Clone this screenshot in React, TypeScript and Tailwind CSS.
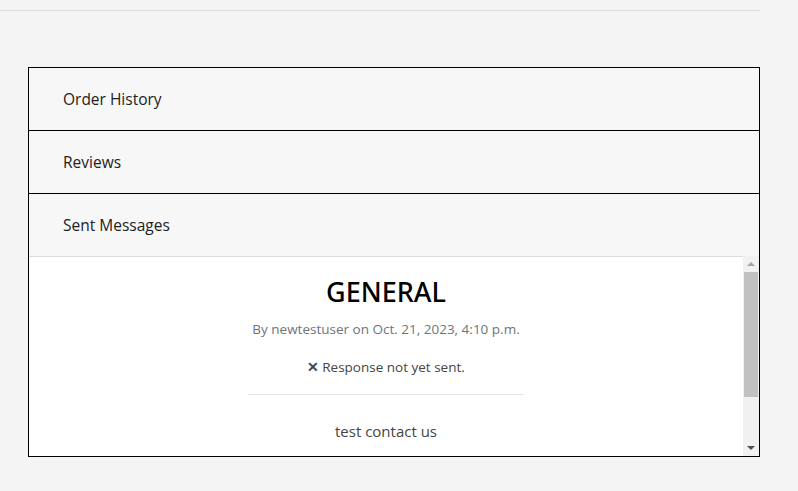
import * as React from "react"

const sections = ["Order History", "Reviews"]

const Scrollbar = () => (
  <div className="flex w-[16px] shrink-0 flex-col items-center bg-[#f1f1f1]">
    <div className="flex h-[16px] w-full items-center justify-center">
      <div className="h-0 w-0 border-x-[4px] border-b-[4px] border-x-transparent border-b-[#a3a3a3]" />
    </div>
    <div className="h-[125px] w-[14px] bg-[#c1c1c1]" />
    <div className="flex-1" />
    <div className="flex h-[16px] w-full items-center justify-center">
      <div className="h-0 w-0 border-x-[4px] border-t-[4px] border-x-transparent border-t-[#505050]" />
    </div>
  </div>
)

const App = () => {
  return (
    <div className="min-h-[491px] w-full bg-[#f4f4f4] font-['Open_Sans',sans-serif] text-[#222]">
      <div className="pt-[10px]">
        <div className="h-px w-[760px] bg-[#dddddd]" />
      </div>

      <div className="ml-[28px] mt-[56px] w-[732px] border border-black">
        {sections.map((s) => (
          <div key={s} className="flex h-[63px] items-center border-b border-black bg-[#f7f7f7] pl-[34px] pt-[2px] text-[15.5px]">
            {s}
          </div>
        ))}
        <div className="flex h-[62px] items-center bg-[#f7f7f7] pl-[34px] pt-[2px] text-[15.5px]">Sent Messages</div>

        {/* message body */}
        <div className="flex h-[200px]">
          <div className="flex-1 overflow-hidden border-t border-[#dddddd] bg-white">
            <div className="flex flex-col items-center pt-[18px]">
              <h2 className="font-['Noto_Sans',sans-serif] text-[27px] font-medium leading-[34px] text-black">GENERAL</h2>
              <p className="mt-[10px] text-[13.5px] leading-[20px] text-[#6c757d]">
                By newtestuser on Oct. 21, 2023, 4:10 p.m.
              </p>
              <p className="mt-[18px] text-[13.5px] leading-[20px] text-[#444]">
                <span className="mr-[3px] font-bold">✕</span>Response not yet sent.
              </p>
              <div className="mt-[17px] h-px w-[276px] bg-[#e5e5e5]" />
              <p className="mt-[24px] text-[15px] leading-[24px] text-[#444]">test contact us</p>
            </div>
          </div>
          <Scrollbar />
        </div>
      </div>
    </div>
  )
}

export default App
